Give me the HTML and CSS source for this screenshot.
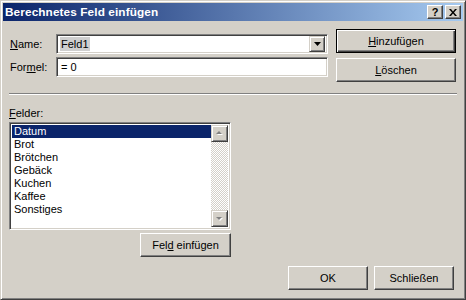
FILE: index.html
```html
<!DOCTYPE html>
<html lang="de">
<head>
  <meta charset="UTF-8">
  <title>Berechnetes Feld einfügen</title>
  <link rel="stylesheet" href="styles.css">
</head>
<body>
  <div class="window">
    <div class="titlebar">
      <span class="title">Berechnetes Feld einfügen</span>
      <div class="title-buttons">
        <span class="tbtn help">?</span>
        <span class="tbtn close">
          <svg width="8" height="7" viewBox="0 0 8 7">
            <path d="M0 0h2l2 2.5 2-2.5h2l-3 3.5 3 3.5h-2l-2-2.5-2 2.5h-2l3-3.5z" fill="#000"/>
          </svg>
        </span>
      </div>
    </div>

    <div class="content">
      <div class="top">
        <div class="fields">
          <label class="lbl"><u>N</u>ame:</label>
          <div class="combo sunken">
            <span class="combo-text"><span class="sel">Feld1</span></span>
            <span class="drop raised">
              <svg width="7" height="4" viewBox="0 0 7 4"><path d="M0 0h7l-3.5 4z" fill="#000"/></svg>
            </span>
          </div>
          <label class="lbl">For<u>m</u>el:</label>
          <div class="textbox sunken">= 0</div>
        </div>
        <div class="side-buttons">
          <button class="btn default"><u>H</u>inzufügen</button>
          <button class="btn"><u>L</u>öschen</button>
        </div>
      </div>

      <div class="separator"></div>

      <div class="felder">
        <label class="lbl"><u>F</u>elder:</label>
        <div class="listbox sunken">
          <ul class="items">
            <li class="selected">Datum</li>
            <li>Brot</li>
            <li>Brötchen</li>
            <li>Gebäck</li>
            <li>Kuchen</li>
            <li>Kaffee</li>
            <li>Sonstiges</li>
          </ul>
          <div class="scrollbar">
            <span class="arrow raised">
              <svg width="7" height="5" viewBox="0 0 7 5"><path d="M1 4h6l-3-3z" fill="#fff"/><path d="M0 3h6l-3-3z" fill="#808080"/></svg>
            </span>
            <span class="track"></span>
            <span class="arrow raised">
              <svg width="7" height="5" viewBox="0 0 7 5"><path d="M1 2h6l-3 3z" fill="#fff"/><path d="M0 1h6l-3 3z" fill="#808080"/></svg>
            </span>
          </div>
        </div>
        <div class="insert-row">
          <button class="btn insert">Fel<u>d</u> einfügen</button>
        </div>
      </div>

      <div class="footer">
        <button class="btn">OK</button>
        <button class="btn">Schließen</button>
      </div>
    </div>
  </div>
</body>
</html>
```

FILE: styles.css
```css
/* Grundlayout */
body {
  margin: 0;
  font-family: "Liberation Sans", Arial, sans-serif;
  font-size: 11px;
  color: #000;
}

u {
  text-decoration: underline;
  text-underline-offset: 1px;
}

/* Fensterrahmen (klassisch 3D) */
.window {
  width: 466px;
  height: 300px;
  box-sizing: border-box;
  background: #d4d0c8;
  border: 1px solid;
  border-color: #d4d0c8 #404040 #404040 #d4d0c8;
  box-shadow: inset 1px 1px #fff, inset -1px -1px #808080;
  padding: 2px;
  display: flex;
  flex-direction: column;
}

/* Titelleiste */
.titlebar {
  height: 18px;
  display: flex;
  align-items: center;
  justify-content: space-between;
  background: linear-gradient(to right, #0a246a, #a6caf0);
  padding: 0 2px 0 2px;
}

.title {
  color: #fff;
  font-weight: bold;
  font-size: 11.8px;
  letter-spacing: 0.1px;
}

.title-buttons {
  display: flex;
  gap: 2px;
}

.tbtn {
  width: 16px;
  height: 14px;
  box-sizing: border-box;
  display: flex;
  align-items: center;
  justify-content: center;
  background: #d4d0c8;
  border: 1px solid;
  border-color: #fff #404040 #404040 #fff;
  box-shadow: inset -1px -1px #808080;
  font-weight: bold;
  font-size: 11px;
  line-height: 1;
}

/* 3D-Stile */
.raised {
  background: #d4d0c8;
  border: 1px solid;
  border-color: #d4d0c8 #404040 #404040 #d4d0c8;
  box-shadow: inset 1px 1px #fff, inset -1px -1px #808080;
  box-sizing: border-box;
}

.sunken {
  background: #fff;
  border: 1px solid;
  border-color: #808080 #fff #fff #808080;
  box-shadow: inset 1px 1px #404040, inset -1px -1px #d4d0c8;
  box-sizing: border-box;
}

/* Inhalt */
.content {
  flex: 1;
  display: flex;
  flex-direction: column;
}

.top {
  display: flex;
  padding: 8px 0 0 6px;
}

.fields {
  display: grid;
  grid-template-columns: 47px 272px;
  grid-auto-rows: 20px;
  row-gap: 3px;
  align-items: center;
  margin-top: 5px;
}

.lbl {
  padding-left: 1px;
}

.combo {
  height: 20px;
  display: flex;
  align-items: center;
  padding: 2px;
}

.combo-text {
  flex: 1;
  padding-left: 1px;
}

.sel {
  background: #cfcfcf;
  padding: 1px 1px;
}

.drop {
  width: 16px;
  height: 16px;
  display: flex;
  align-items: center;
  justify-content: center;
}

.textbox {
  height: 20px;
  display: flex;
  align-items: center;
  padding-left: 4px;
}

/* Schaltflächen */
.side-buttons {
  display: flex;
  flex-direction: column;
  gap: 5px;
  margin-left: 8px;
}

.btn {
  font-family: inherit;
  font-size: 11px;
  color: #000;
  width: 120px;
  height: 24px;
  padding: 0;
  background: #d4d0c8;
  border: 1px solid;
  border-color: #fff #404040 #404040 #fff;
  box-shadow: inset -1px -1px #808080;
  box-sizing: border-box;
}

.btn.default {
  border-color: #000;
  box-shadow: inset 1px 1px #fff, inset -1px -1px #404040, inset -2px -2px #808080;
}

.separator {
  margin: 11px 0 0 6px;
  width: 448px;
  height: 1px;
  background: #808080;
  border-bottom: 1px solid #fff;
}

/* Felderliste */
.felder {
  width: 222px;
  margin: 12px 0 0 6px;
  display: flex;
  flex-direction: column;
}

.felder .lbl {
  line-height: 13px;
  margin-bottom: 2px;
  padding-left: 0;
}

.listbox {
  height: 108px;
  display: flex;
  padding: 2px;
}

.items {
  flex: 1;
  list-style: none;
  margin: 0;
  padding: 0;
}

.items li {
  height: 13px;
  line-height: 13px;
  padding-left: 2px;
}

.items li.selected {
  background: #0a246a;
  color: #fff;
}

.scrollbar {
  width: 17px;
  display: flex;
  flex-direction: column;
}

.arrow {
  height: 17px;
  display: flex;
  align-items: center;
  justify-content: center;
}

.track {
  flex: 1;
  background-image: repeating-conic-gradient(#fff 0 25%, #d4d0c8 0 50%);
  background-size: 2px 2px;
}

.insert-row {
  display: flex;
  justify-content: flex-end;
  margin-top: 3px;
}

.btn.insert {
  width: 91px;
}

.footer {
  display: flex;
  justify-content: flex-end;
  gap: 6px;
  margin-top: 9px;
  padding-right: 9px;
}

.footer .btn {
  width: 80px;
}
```
